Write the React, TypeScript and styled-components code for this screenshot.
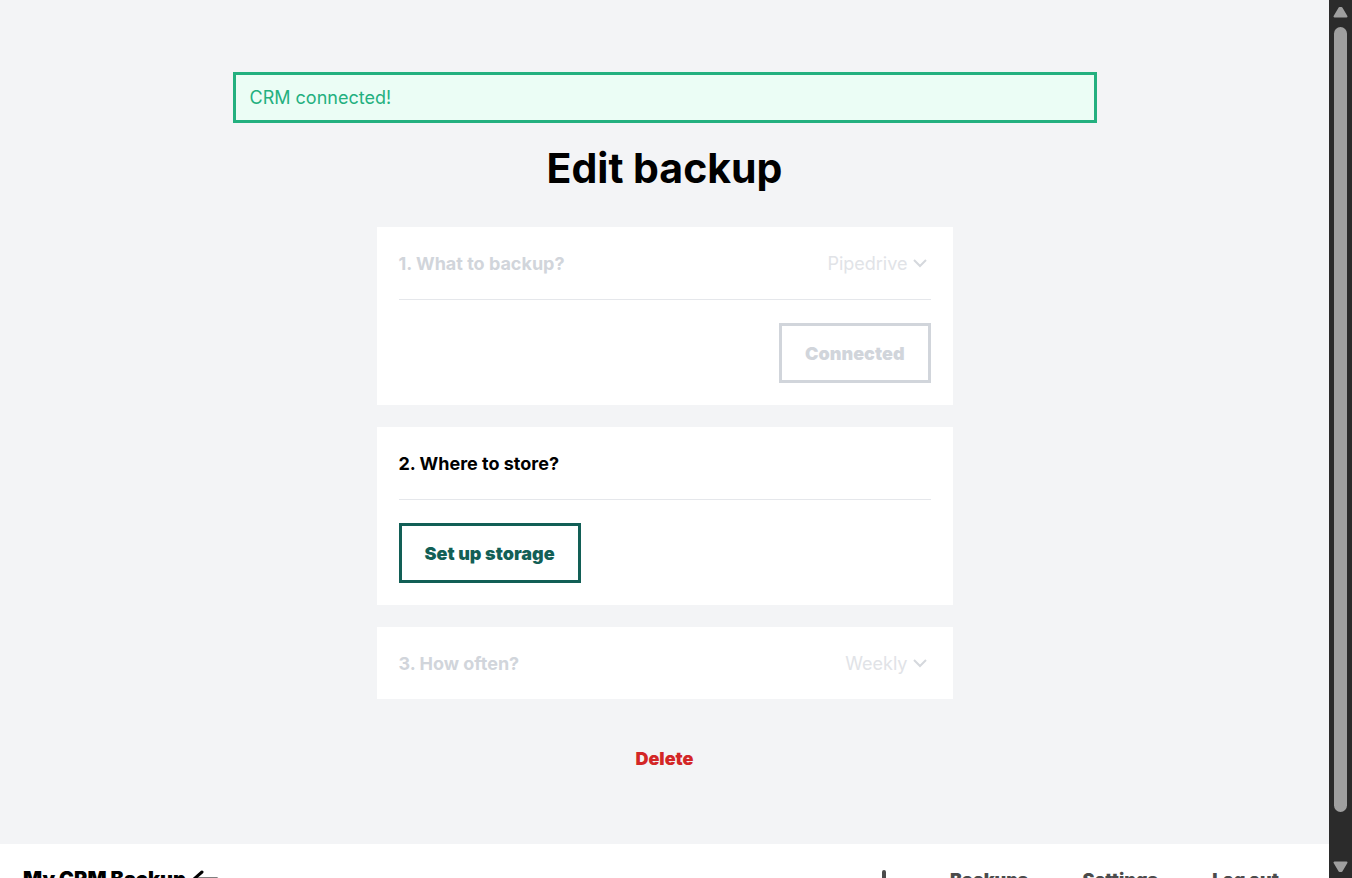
import React from "react";
import styled, { createGlobalStyle } from "styled-components";

const GlobalStyle = createGlobalStyle`
  *, *::before, *::after { box-sizing: border-box; }
  body {
    margin: 0;
    background: #f3f4f6;
    color: #000;
    font: 400 18px/27px Inter, "Liberation Sans", sans-serif;
  }
  h1, h2, p { margin: 0; }
  button, select { font: inherit; color: inherit; }
`;

const Shell = styled.div`
  display: grid;
  grid-template-columns: minmax(0, 1fr) 23px;
  height: 100vh;
  overflow: hidden;
`;

const Page = styled.div`
  min-height: 0;
  overflow: hidden;
`;

const Main = styled.main`
  display: flex;
  flex-direction: column;
  align-items: center;
  padding: 72px 22px;
`;

const Notice = styled.p`
  width: 100%;
  max-width: 864px;
  padding: 9px 14px;
  border: 3px solid #23b07f;
  background: #ebfdf5;
  color: #23b07f;
`;

const Title = styled.h1`
  margin: 22px 0 36px;
  font-size: 41px;
  line-height: 46px;
  font-weight: 700;
`;

const Steps = styled.div`
  display: flex;
  flex-direction: column;
  gap: 22px;
  width: 100%;
  max-width: 576px;
`;

const Card = styled.section`
  padding: 0 22px;
  background: #fff;
`;

const CardHeader = styled.div<{ $muted?: boolean }>`
  display: flex;
  align-items: center;
  justify-content: space-between;
  height: 72px;
  color: ${(p) => (p.$muted ? "#d1d5db" : "#000")};
`;

const CardTitle = styled.h2`
  font-size: 18px;
  line-height: 27px;
  font-weight: 700;
`;

const CardBody = styled.div<{ $end?: boolean }>`
  display: flex;
  justify-content: ${(p) => (p.$end ? "flex-end" : "flex-start")};
  padding: 23px 0 22px;
  border-top: 1px solid #e5e7eb;
`;

const OutlineButton = styled.button`
  height: 60px;
  padding: 0 23px;
  border: 3px solid #125f56;
  background: transparent;
  color: #125f56;
  font-weight: 900;
  cursor: pointer;

  &:disabled {
    border-color: #d1d5db;
    color: #d1d5db;
    cursor: default;
  }
`;

const SelectWrap = styled.label`
  display: grid;
  grid-template-columns: auto;
  align-items: center;
  justify-items: end;

  & > * { grid-area: 1 / 1; }
  & > svg { margin-right: 4px; pointer-events: none; }
`;

const Select = styled.select`
  width: 126px;
  padding: 0 23px 0 0;
  border: 0;
  background: transparent;
  appearance: none;
  text-align-last: right;

  &:disabled { color: #e1e3e7; opacity: 1; }
`;

const DeleteButton = styled.button`
  margin-top: 46px;
  padding: 0;
  border: 0;
  background: transparent;
  color: #d32626;
  font-weight: 900;
  cursor: pointer;
`;

const BottomBar = styled.footer`
  display: flex;
  align-items: center;
  justify-content: space-between;
  height: 70px;
  padding: 0 50px 0 23px;
  background: #fff;
`;

const Brand = styled.a`
  display: flex;
  align-items: center;
  gap: 4px;
  color: #000;
  font-size: 20px;
  font-weight: 900;
  text-decoration: none;
`;

const Nav = styled.nav`
  display: flex;
  align-items: center;
  gap: 54px;
`;

const NavLink = styled.a`
  display: flex;
  color: #4b4b4b;
  font-weight: 900;
  text-decoration: none;
`;

const ScrollTrack = styled.div`
  display: flex;
  flex-direction: column;
  align-items: center;
  padding: 6px 0 5px;
  background: #2b2b2b;
`;

const ScrollThumb = styled.div`
  flex: 0 1 785px;
  width: 13px;
  margin: 9px 0 auto;
  border-radius: 7px;
  background: #9f9f9f;
`;

const Chevron = () => (
  <svg width="14" height="10" viewBox="0 0 14 10" fill="none" aria-hidden="true">
    <path d="M1 2l6 6 6-6" stroke="#d5d8dd" strokeWidth="2" />
  </svg>
);

const ScrollArrow = ({ down }: { down?: boolean }) => (
  <svg width="15" height="12" viewBox="0 0 15 12" aria-hidden="true">
    <path
      d={down ? "M1.5 1.5h12L8.5 10h-2z" : "M1.5 10.5h12L8.5 2h-2z"}
      fill="#9f9f9f"
      stroke="#9f9f9f"
      strokeWidth="2"
      strokeLinejoin="round"
    />
  </svg>
);

type PickerProps = { label: string; value: string };

const Picker = ({ label, value }: PickerProps) => (
  <SelectWrap>
    <Select aria-label={label} disabled defaultValue={value}>
      <option>{value}</option>
    </Select>
    <Chevron />
  </SelectWrap>
);

export default function App() {
  return (
    <Shell>
      <GlobalStyle />
      <Page>
        <Main>
          <Notice role="status">CRM connected!</Notice>
          <Title>Edit backup</Title>
          <Steps>
            <Card>
              <CardHeader $muted>
                <CardTitle>1. What to backup?</CardTitle>
                <Picker label="What to backup?" value="Pipedrive" />
              </CardHeader>
              <CardBody $end>
                <OutlineButton disabled>Connected</OutlineButton>
              </CardBody>
            </Card>
            <Card>
              <CardHeader>
                <CardTitle>2. Where to store?</CardTitle>
              </CardHeader>
              <CardBody>
                <OutlineButton>Set up storage</OutlineButton>
              </CardBody>
            </Card>
            <Card>
              <CardHeader $muted>
                <CardTitle>3. How often?</CardTitle>
                <Picker label="How often?" value="Weekly" />
              </CardHeader>
            </Card>
          </Steps>
          <DeleteButton>Delete</DeleteButton>
        </Main>
        <BottomBar>
          <Brand href="#home">
            My CRM Backup
            <svg width="30" height="20" viewBox="0 0 30 20" fill="none" aria-hidden="true">
              <path d="M12 3L4 10l8 7" stroke="#000" strokeWidth="3" strokeLinecap="round" />
              <path d="M5 10h22" stroke="#000" strokeWidth="3" strokeLinecap="round" />
            </svg>
          </Brand>
          <Nav>
            <NavLink href="#new" aria-label="New backup">
              <svg width="22" height="22" viewBox="0 0 22 22" fill="none" aria-hidden="true">
                <path d="M10 4v16M2 12h16" stroke="#4b4b4b" strokeWidth="4" strokeLinecap="round" />
              </svg>
            </NavLink>
            <NavLink href="#backups">Backups</NavLink>
            <NavLink href="#settings">Settings</NavLink>
            <NavLink href="#logout">Log out</NavLink>
          </Nav>
        </BottomBar>
      </Page>
      <ScrollTrack aria-hidden="true">
        <ScrollArrow />
        <ScrollThumb />
        <ScrollArrow down />
      </ScrollTrack>
    </Shell>
  );
}
